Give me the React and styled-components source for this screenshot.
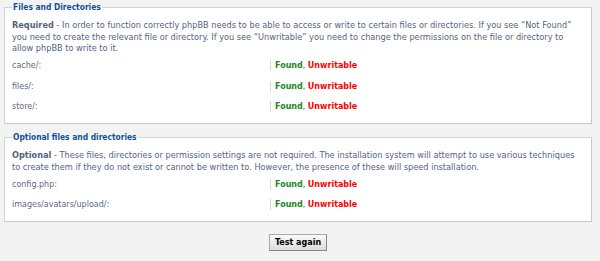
import React from "react";
import styled, { createGlobalStyle } from "styled-components";

const Global = createGlobalStyle`
  html, body { margin: 0; padding: 0; background: #f3f3f3; }
  body { font-family: "DejaVu Sans", Verdana, sans-serif; }
`;

const Page = styled.div`
  padding: 0 8px 0 4px;
  display: flex;
  flex-direction: column;
`;

const Fieldset = styled.fieldset`
  margin: ${(p) => p.$top}px 0 0 0;
  padding: 7px 7px 6px 7px;
  border: 1px solid #d4d4d4;
  border-right-color: #c8c8c8;
  border-bottom-color: #c8c8c8;
  background: #fff;
  min-width: 0;
`;

const Legend = styled.legend`
  padding: 0 1px;
  margin-left: 0;
  font-family: "DejaVu Sans Condensed", "DejaVu Sans", sans-serif;
  font-weight: bold;
  font-size: 8.4px;
  line-height: 11px;
  color: #115098;
`;

const Para = styled.p`
  margin: 0 0 1px 0;
  font-size: 8.2px;
  line-height: 11.5px;
  color: #536482;
`;

const Strong = styled.strong`
  color: #536482;
`;

const Row = styled.div`
  display: grid;
  grid-template-columns: 258px 1fr;
  align-items: center;
  height: 20.5px;
  font-size: 8px;
`;

const Label = styled.div`
  color: #5d6a80;
`;

const Status = styled.div`
  border-left: 1px solid #d8d8d8;
  padding-left: 4px;
  line-height: 11px;
  color: #536482;
`;

const Found = styled.span`
  color: #228822;
  font-weight: bold;
`;

const Bad = styled.span`
  color: #ff0000;
  font-weight: bold;
`;

const Actions = styled.div`
  display: flex;
  justify-content: center;
  padding-top: 12px;
`;

const Button = styled.button`
  width: 58px;
  height: 17px;
  padding: 0;
  font-family: "DejaVu Sans", sans-serif;
  font-weight: bold;
  font-size: 8px;
  color: #000;
  background: linear-gradient(#fafafa, #dcdcdc);
  border: 1px solid #888;
  border-top-color: #aaa;
  border-left-color: #aaa;
`;

const StatusRow = ({ name }) => (
  <Row>
    <Label>{name}</Label>
    <Status>
      <Found>Found</Found>, <Bad>Unwritable</Bad>
    </Status>
  </Row>
);

export default function App() {
  return (
    <>
      <Global />
      <Page>
        <Fieldset $top={2}>
          <Legend>Files and Directories</Legend>
          <Para>
            <Strong>Required</Strong> - In order to function correctly phpBB needs to be able to access or write to certain files or directories. If you see “Not Found” you need to create the relevant file or directory. If you see “Unwritable” you need to change the permissions on the file or directory to allow phpBB to write to it.
          </Para>
          <StatusRow name="cache/:" />
          <StatusRow name="files/:" />
          <StatusRow name="store/:" />
        </Fieldset>
        <Fieldset $top={8}>
          <Legend>Optional files and directories</Legend>
          <Para>
            <Strong>Optional</Strong> - These files, directories or permission settings are not required. The installation system will attempt to use various techniques to create them if they do not exist or cannot be written to. However, the presence of these will speed installation.
          </Para>
          <StatusRow name="config.php:" />
          <StatusRow name="images/avatars/upload/:" />
        </Fieldset>
        <Actions>
          <Button>Test again</Button>
        </Actions>
      </Page>
    </>
  );
}
